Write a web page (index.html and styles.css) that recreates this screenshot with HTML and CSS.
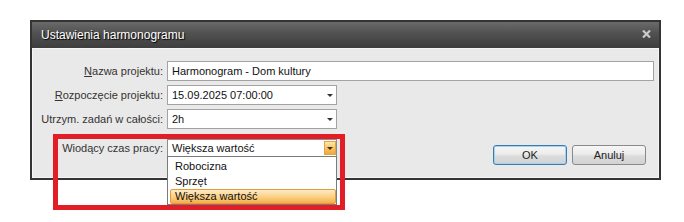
FILE: index.html
```html
<!DOCTYPE html>
<html>

<head>
    <meta charset="utf-8">
    <title>Ustawienia harmonogramu</title>
    <link rel="stylesheet" href="styles.css">
</head>

<body>
    <div class="page">
        <div class="dialog">
            <div class="titlebar">
                <span class="title">Ustawienia harmonogramu</span>
                <svg class="close" width="9" height="8" viewBox="0 0 9 8">
                    <path d="M1 0.5 L8 7.5 M8 0.5 L1 7.5" stroke="#c9c9c9" stroke-width="2.2" fill="none" />
                </svg>
            </div>
            <div class="content">
                <div class="row">
                    <label class="label"><u>N</u>azwa projektu:</label>
                    <div class="field wide">Harmonogram - Dom kultury</div>
                </div>
                <div class="row">
                    <label class="label"><u>R</u>ozpoczęcie projektu:</label>
                    <div class="field combo">15.09.2025 07:00:00<span class="arrow"></span></div>
                </div>
                <div class="row">
                    <label class="label">Utrzym. zadań w całości:</label>
                    <div class="field combo">2h<span class="arrow"></span></div>
                </div>
                <div class="row last">
                    <label class="label">Wiodący czas pracy:</label>
                    <div class="field combo open">
                        Większa wartość
                        <span class="drop-btn"><span class="arrow"></span></span>
                        <ul class="list">
                            <li>Robocizna</li>
                            <li>Sprzęt</li>
                            <li class="selected">Większa wartość</li>
                        </ul>
                    </div>
                    <div class="buttons">
                        <button class="btn default">OK</button>
                        <button class="btn">Anuluj</button>
                    </div>
                </div>
            </div>
        </div>
    </div>
    <div class="marker"></div>
</body>

</html>
```

FILE: styles.css
```css
* {
    box-sizing: border-box;
    margin: 0;
    padding: 0;
}

body {
    background-color: #fff;
    color: #333;
    font-family: "Liberation Sans", Arial, sans-serif;
    font-size: 11px;
    height: 222px;
    position: relative;
}

.page {
    padding: 20px 0 0 30px;
}

.dialog {
    border: 2px solid #343434;
    width: 631px;
}

.titlebar {
    align-items: center;
    background: linear-gradient(#6a6a6a, #505050 45%, #3e3e3e);
    display: flex;
    height: 26px;
    justify-content: space-between;
    padding: 0 8px 0 9px;
}

.title {
    color: #fff;
    font-size: 12px;
    text-shadow: 1px 1px 1px #000;
}

.close {
    display: block;
    margin-top: -2px;
}

.content {
    background-color: #e9e9e9;
    border: 1px solid #f6f6f6;
    height: 130px;
    padding: 12px 4px 0 0;
}

.row {
    align-items: center;
    display: flex;
    height: 20px;
    margin-bottom: 4px;
}

.label {
    margin-right: 4px;
    text-align: right;
    width: 130px;
}

.field {
    background-color: #fff;
    border: 1px solid #a3a3a3;
    color: #111;
    height: 20px;
    line-height: 18px;
    padding: 0 4px;
    position: relative;
}

.wide {
    flex: 1;
}

.combo {
    width: 170px;
}

.arrow {
    border-left: 3px solid transparent;
    border-right: 3px solid transparent;
    border-top: 3px solid #333;
    height: 0;
    position: absolute;
    right: 3px;
    top: 8px;
    width: 0;
}

.row.last {
    align-items: flex-start;
    height: auto;
    margin-top: 10px;
}

.row.last .label {
    line-height: 18px;
}

.open {
    border-color: #8c8c8c;
    height: 18px;
    line-height: 16px;
}

.drop-btn {
    background: linear-gradient(#fde7b0, #f7c364 50%, #efa93b);
    border: 1px solid #e0a445;
    height: 14px;
    position: absolute;
    right: 0;
    top: 1px;
    width: 12px;
}

.drop-btn .arrow {
    border-top-color: #3a3020;
    right: 2px;
    top: 5px;
}

.list {
    background-color: #fff;
    border: 1px solid #7a7a7a;
    height: 49px;
    left: -1px;
    list-style: none;
    padding: 2px 0 0 2px;
    position: absolute;
    right: -1px;
    top: 16px;
    z-index: 2;
}

.list li {
    border: 1px solid transparent;
    height: 15px;
    line-height: 13px;
    padding-left: 4px;
}

.list li.selected {
    background: linear-gradient(#fdebc6, #fbd28a 50%, #f6ae4a);
    border-color: #e19c3c;
    border-radius: 2px;
}

.buttons {
    display: flex;
    gap: 5px;
    margin: 6px 8px 0 auto;
}

.btn {
    background: linear-gradient(#f6f6f6, #ececec 45%, #dcdcdc 55%, #d2d2d2);
    border: 1px solid #8a8a8a;
    border-radius: 3px;
    color: #222;
    font-family: "Liberation Sans", Arial, sans-serif;
    font-size: 11px;
    height: 20px;
    width: 74px;
}

.btn.default {
    border-color: #3d7bad;
    box-shadow: inset 0 0 0 1px #a6d2f0;
}

.marker {
    border: 5px solid #e31d25;
    height: 76px;
    left: 53px;
    position: absolute;
    top: 134px;
    width: 292px;
}
```
